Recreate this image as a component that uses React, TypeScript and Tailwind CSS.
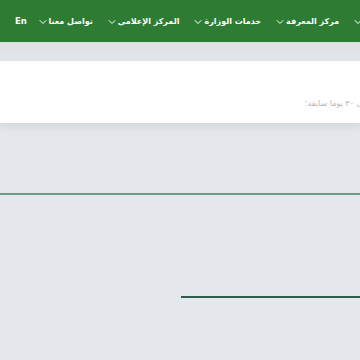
import { ChevronDown } from "lucide-react";

const navItems = ["عن الوزارة", "مركز المعرفة", "خدمات الوزارة", "المركز الإعلامي", "تواصل معنا"];

function NavItem({ label }: { label: string }) {
  return (
    <div className="flex shrink-0 items-center">
      <span className="whitespace-nowrap text-[8px] font-bold text-white">{label}</span>
      <ChevronDown className="h-[12px] w-[12px] shrink-0 text-white" strokeWidth={2} />
    </div>
  );
}

export default function App() {
  return (
    <div
      className="h-[360px] w-[360px] overflow-hidden bg-[#e4e8ec]"
      style={{ fontFamily: '"DejaVu Sans", "Noto Sans", sans-serif' }}
    >
      <header className="flex h-[42px] items-center overflow-hidden bg-[#2e7b33] pl-[15px] pt-[1px] shadow-[0_1px_2px_rgba(0,0,0,0.15)]">
        <span className="shrink-0 text-[8.5px] font-bold text-white">En</span>
        <div dir="rtl" className="mr-[-47px] flex min-w-0 flex-1 items-center gap-[13px]">
          {navItems.map((label) => (
            <NavItem key={label} label={label} />
          ))}
        </div>
      </header>

      <div className="h-[19px] bg-gradient-to-b from-[#dde1e5] to-[#e2e6ea]" />

      <div className="flex h-[62px] items-center justify-end overflow-hidden bg-white shadow-[0_4px_8px_rgba(0,0,0,0.08)]">
        <p dir="rtl" className="mr-[-12px] mt-[23px] whitespace-nowrap text-[8px] text-[#b5b5b5]">
          خلال ٣٠ يوما سابقة:
        </p>
      </div>

      <div className="h-[70px]" />
      <div className="h-[2px] bg-[#6f9987]" />

      <div className="h-[101px]" />
      <div className="flex justify-end">
        <div className="h-[2px] w-[179px] bg-[#2f5d49]" />
      </div>
    </div>
  );
}
